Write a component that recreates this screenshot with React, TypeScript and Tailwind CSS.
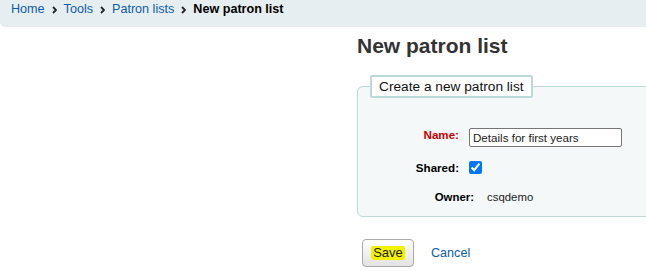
import React from "react";

const Chevron = () => (
  <svg width="5" height="8" viewBox="0 0 5 8" className="shrink-0">
    <path d="M1 1 L4 4 L1 7" fill="none" stroke="#222" strokeWidth="1.8" />
  </svg>
);

export default function App() {
  return (
    <div
      className="w-[646px] h-[274px] overflow-hidden bg-white text-[#222]"
      style={{ fontFamily: '"Liberation Sans", Arial, sans-serif' }}
    >
      <div className="h-[27px] w-full bg-[#e6eef1] rounded-bl-[5px] flex items-start pl-[11px] pt-[2px]">
        <div className="flex items-center gap-[7px] text-[12.6px] leading-[15px]">
          <a className="text-[#0d5ba6]">Home</a>
          <Chevron />
          <a className="text-[#0d5ba6]">Tools</a>
          <Chevron />
          <a className="text-[#0d5ba6]">Patron lists</a>
          <Chevron />
          <span className="font-bold text-black">New patron list</span>
        </div>
      </div>

      <div className="flex">
        <div className="w-[357px] shrink-0" />
        <div className="flex flex-col shrink-0">
          <h1 className="mt-[8px] text-[21px] leading-[21px] font-bold text-[#333] whitespace-nowrap">
            New patron list
          </h1>

          <fieldset className="mt-[19px] w-[320px] border border-[#bcd9da] rounded-tl-[6px] rounded-bl-[6px] bg-[#f4f8f9] pl-[12px] pt-[30px] pb-[11px]">
            <legend className="bg-white border-2 border-[#bcd9da] rounded-[2px] px-[7px] py-[2px] text-[13.7px] leading-[15px] text-[#111]">
              Create a new patron list
            </legend>
            <div className="flex items-start h-[19px]">
              <label className="w-[89px] text-right font-bold text-[11.6px] leading-none text-[#c00] mt-[1px]">
                Name:
              </label>
              <input
                type="text"
                defaultValue="Details for first years"
                className="ml-[10px] w-[153px] h-[19px] border border-[#767676] rounded-[2px] bg-white px-[3px] text-[11.6px] text-[#222] outline-none"
              />
            </div>
            <div className="flex items-center h-[13px] mt-[14px]">
              <label className="w-[89px] text-right font-bold text-[11.6px] leading-none text-black">
                Shared:
              </label>
              <input
                type="checkbox"
                defaultChecked
                className="ml-[10px] w-[13px] h-[13px] m-0 accent-[#0075ff]"
              />
            </div>
            <div className="flex items-center h-[14px] mt-[17px]">
              <span className="w-[104px] text-right font-bold text-[11.4px] leading-none text-black">
                Owner:
              </span>
              <span className="ml-[13px] text-[11.4px] leading-none text-[#222]">
                csqdemo
              </span>
            </div>
          </fieldset>

          <div className="flex items-center mt-[22px] ml-[5px]">
            <button className="w-[52px] h-[28px] border border-[#a9a9a9] rounded-[4px] bg-gradient-to-b from-white to-[#e2e2e2] flex items-center justify-center text-[13px] text-[#222]">
              <span className="bg-[#f2f200] px-[2px] leading-[14px] rounded-[2px]">Save</span>
            </button>
            <a className="ml-[17px] text-[12.6px] text-[#0d5ba6]">Cancel</a>
          </div>
        </div>
      </div>
    </div>
  );
}
